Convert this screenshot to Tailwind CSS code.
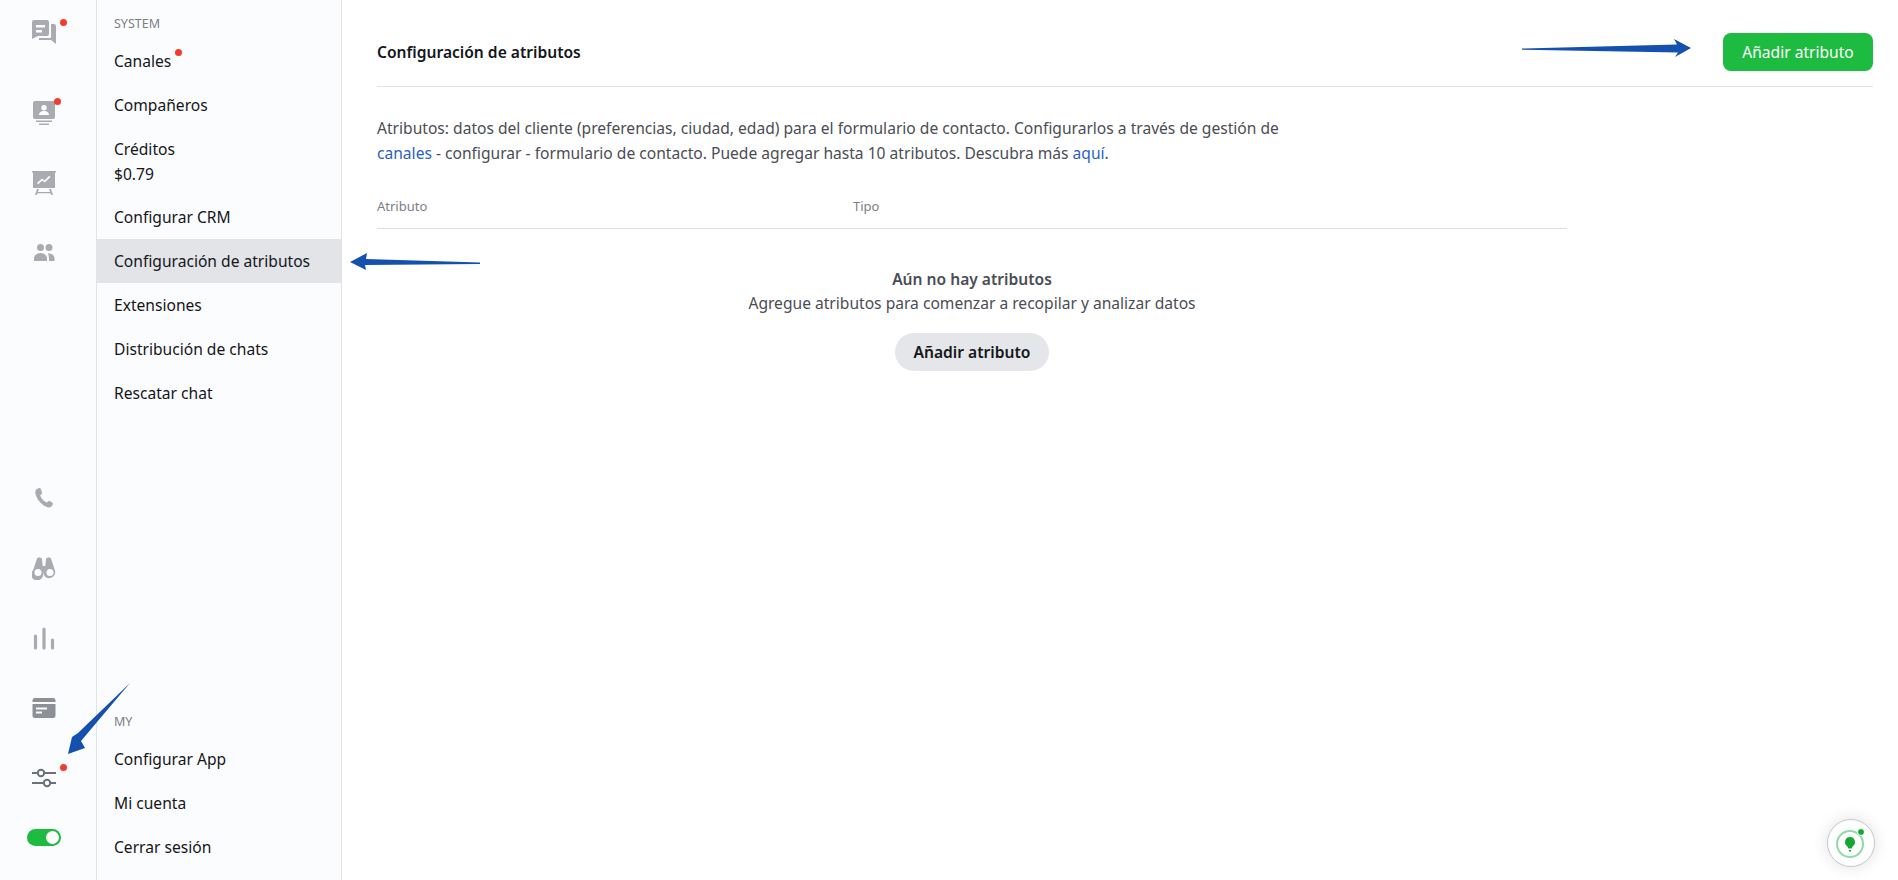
<!DOCTYPE html>
<html lang="es">
  <head>
    <meta charset="UTF-8">
    <meta name="viewport" content="width=device-width, initial-scale=1.0">
    <title>Configuración de atributos</title>
    <script src="https://cdn.jsdelivr.net/npm/@tailwindcss/browser@4"></script>
  </head>
  <body class="bg-white font-['Noto_Sans',sans-serif] text-[15.6px] text-[#14161a] overflow-hidden">
    <div class="relative flex h-[880px] w-[1898px]">

      <!-- icon rail -->
      <nav class="flex w-[97px] shrink-0 flex-col justify-between border-r border-[#e1e3e7] bg-[#fbfcfe] pb-[19px] pr-[9px]">
        <div>
          <div class="flex h-[64px] items-center justify-center">
            <div class="relative h-6 w-6">
              <svg viewBox="0 0 24 24" class="h-6 w-6 text-[#a9abb0]" fill="currentColor"><path fill-rule="evenodd" d="M2 0h13a2 2 0 0 1 2 2v12a2 2 0 0 1-2 2H6l-6 3V2a2 2 0 0 1 2-2zm2 5v2.500h9V5zm0 5v2.500h6V10z"/><path d="M19 4h3a2 2 0 0 1 2 2v18l-5-4H7v-2h12z"/></svg>
              <span class="absolute left-[28px] top-[-1px] h-[7px] w-[7px] rounded-full bg-[#f23c30]"></span>
            </div>
          </div>
          <div class="mt-[14px] flex h-[70px] items-center justify-center">
            <div class="relative h-6 w-6">
              <svg viewBox="0 0 24 24" class="h-6 w-6 text-[#a9abb0]" fill="currentColor"><path fill-rule="evenodd" d="M3 0h18a2 2 0 0 1 2 2v14a2 2 0 0 1-2 2H3a2 2 0 0 1-2-2V2a2 2 0 0 1 2-2zm9 4a2.700 2.700 0 1 0 0 5.400A2.700 2.700 0 0 0 12 4zm-5 10h10c0-2.500-2.500-4-5-4s-5 1.500-5 4z"/><path d="M4 19.500h16V21H4zM7 22.500h10V24H7z"/></svg>
              <span class="absolute left-[22px] top-[-3px] h-[7px] w-[7px] rounded-full bg-[#f23c30]"></span>
            </div>
          </div>
          <div class="flex h-[70px] items-center justify-center">
            <svg viewBox="0 0 24 24" class="h-6 w-6 text-[#a9abb0]" fill="currentColor"><path fill-rule="evenodd" d="M0 0h24v1.500h-1V17H1V1.500H0zM5 12l1.200 1.200 4-3.700 2.500 2L18.500 6l-1.300-1.200-4.700 4.700-2.400-2z"/><path d="M5 18h2l-1 3h12l-1-3h2l2 6h-1.800l-.7-1.800H5.500L4.800 24H3z"/></svg>
          </div>
          <div class="flex h-[70px] items-center justify-center">
            <svg viewBox="0 0 24 24" class="h-6 w-6 text-[#a9abb0]" fill="currentColor"><circle cx="8.500" cy="6.500" r="3.500"/><circle cx="17" cy="6.500" r="3.500"/><path d="M2 20v-2.500C2 14 5.500 12 8.500 12s6.500 2 6.500 5.500V20z"/><path d="M16 12.200c3 0 6.500 1.800 6.500 5V20H17v-2.500c0-2-.5-3.800-1-5.300z"/></svg>
          </div>
        </div>
        <div>
          <div class="flex h-[70px] items-center justify-center">
            <svg viewBox="0 0 24 24" class="h-6 w-6 text-[#a9abb0]" fill="currentColor"><path d="M7 2 4.500 3.200C3 4.500 3 7 4.200 10c1.800 4.800 5.800 9 10 10.800 2.500 1 4.700.8 5.800-.8l.8-1.700c.2-.7 0-1.300-.6-1.700l-2.500-1.500c-.6-.3-1.200-.2-1.700.3l-1 1.200c-3-1-5.700-4-6.800-7.300l1.300-1.100c.5-.4.600-1 .4-1.600L8.900 2.900C8.600 2.100 7.800 1.700 7 2z"/></svg>
          </div>
          <div class="flex h-[70px] items-center justify-center">
            <svg viewBox="0 0 24 24" class="h-6 w-6 text-[#a9abb0]" fill="currentColor"><path fill-rule="evenodd" d="M5 2.500C5.500 1 9.500 1 10 3l.7 7h2.600l.7-7c.5-2 4.500-2 5 -.5l3.800 11.500a6 6 0 1 1-11.600 2.500h-.4A6 6 0 1 1 1.200 14zM6 13a3.500 3.500 0 1 0 0 7 3.500 3.500 0 0 0 0-7zm12 0a3.500 3.500 0 1 0 0 7 3.500 3.500 0 0 0 0-7z"/></svg>
          </div>
          <div class="flex h-[70px] items-center justify-center">
            <svg viewBox="0 0 24 24" class="h-6 w-6 text-[#a9abb0]" fill="none" stroke="currentColor" stroke-width="3.200" stroke-linecap="round"><path d="M3.500 10v12M12 3v19M20.500 14v8"/></svg>
          </div>
          <div class="flex h-[70px] items-center justify-center">
            <svg viewBox="0 0 24 24" class="h-6 w-6 text-[#8d9096]" fill="currentColor"><path fill-rule="evenodd" d="M3 2h18a2.500 2.500 0 0 1 2.500 2.500V6H.5V4.500A2.500 2.500 0 0 1 3 2zM.5 8h23v11.500A2.500 2.500 0 0 1 21 22H3a2.500 2.500 0 0 1-2.500-2.500zM4 11.500v2h11v-2zm0 4v2h6v-2z"/></svg>
          </div>
          <div class="flex h-[70px] items-center justify-center">
            <div class="relative h-6 w-6">
              <svg viewBox="0 0 24 24" class="h-6 w-6 text-[#6d7076]" fill="none" stroke="currentColor" stroke-width="2"><path d="M0 7h5.500M12 7h12M0 17h11.500M18 17h6" stroke-linecap="round"/><circle cx="9" cy="7" r="3.200"/><circle cx="15" cy="17" r="3.200"/></svg>
              <span class="absolute left-[28px] top-[-2px] h-[7px] w-[7px] rounded-full bg-[#f23c30]"></span>
            </div>
          </div>
          <div class="flex h-[48px] items-center justify-center">
            <div class="flex h-[17px] w-[34px] items-center justify-end rounded-full bg-[#1dbb3f] pr-[2px]">
              <span class="h-[13px] w-[13px] rounded-full bg-white"></span>
            </div>
          </div>
        </div>
      </nav>

      <!-- submenu -->
      <aside class="flex w-[245px] shrink-0 flex-col justify-between border-r border-[#e1e3e7] bg-[#fbfcfe] pb-[11px]">
        <div>
          <div class="px-[17px] pt-[16px] pb-[7px] text-[12.500px] leading-[16px] text-[#7b7e85]">SYSTEM</div>
          <a class="flex h-[44px] items-center px-[17px] pt-[2px]"><span class="relative">Canales<span class="absolute right-[-11px] top-[-1px] h-[7px] w-[7px] rounded-full bg-[#f23c30]"></span></span></a>
          <a class="flex h-[44px] items-center px-[17px] pt-[2px]">Compañeros</a>
          <a class="block h-[68px] px-[17px] pt-[10px] leading-[25px]">Créditos<br>$0.79</a>
          <a class="flex h-[44px] items-center px-[17px] pt-[2px]">Configurar CRM</a>
          <a class="flex h-[44px] items-center bg-[#e2e4e8] px-[17px] pt-[2px]">Configuración de atributos</a>
          <a class="flex h-[44px] items-center px-[17px] pt-[2px]">Extensiones</a>
          <a class="flex h-[44px] items-center px-[17px] pt-[2px]">Distribución de chats</a>
          <a class="flex h-[44px] items-center px-[17px] pt-[2px]">Rescatar chat</a>
        </div>
        <div>
          <div class="px-[17px] pb-[7px] text-[12.500px] leading-[16px] text-[#7b7e85]">MY</div>
          <a class="flex h-[44px] items-center px-[17px] pt-[2px]">Configurar App</a>
          <a class="flex h-[44px] items-center px-[17px] pt-[2px]">Mi cuenta</a>
          <a class="flex h-[44px] items-center px-[17px] pt-[2px]">Cerrar sesión</a>
        </div>
      </aside>

      <!-- main -->
      <main class="min-w-0 flex-1 pl-[35px] pr-[25px]">
        <header class="flex h-[87px] items-center justify-between border-b border-[#e1e3e7] pt-[18px]">
          <h1 class="pt-[2px] font-semibold text-[#14161a]">Configuración de atributos</h1>
          <button class="h-[38px] w-[150px] rounded-[8px] bg-[#1dbb3f] pt-[2px] text-white">Añadir atributo</button>
        </header>
        <p class="mt-[29px] w-[930px] leading-[25px] text-[#4a4d54]">
          Atributos: datos del cliente (preferencias, ciudad, edad) para el formulario de contacto. Configurarlos a través de gestión de
          <a class="text-[#2a5fc0]">canales</a> - configurar - formulario de contacto. Puede agregar hasta 10 atributos. Descubra más <a class="text-[#2a5fc0]">aquí</a>.
        </p>
        <div class="mt-[29px] w-[1190px]">
          <div class="flex h-[34px] items-center border-b border-[#dcdee2] pb-[9px] text-[13px] text-[#7b7e85]">
            <span class="w-[476px]">Atributo</span>
            <span>Tipo</span>
          </div>
          <div class="flex flex-col items-center pt-[38px] text-center">
            <div class="font-semibold leading-[24px] text-[#4a4d54]">Aún no hay atributos</div>
            <div class="leading-[24px] text-[#4a4d54]">Agregue atributos para comenzar a recopilar y analizar datos</div>
            <button class="mt-[18px] h-[38px] w-[154px] rounded-full bg-[#e4e6e9] pt-[2px] font-semibold text-[#14161a]">Añadir atributo</button>
          </div>
        </div>
      </main>

      <!-- help widget -->
      <div class="absolute left-[1827px] top-[819px] flex h-[48px] w-[48px] items-center justify-center rounded-full border border-[#c6c8cc] bg-white shadow-[0_0_16px_rgba(0,0,0,0.12)]">
        <svg viewBox="0 0 32 32" class="h-8 w-8" fill="none">
          <circle cx="15" cy="17" r="13" stroke="#8edca8" stroke-width="2"/>
          <circle cx="26" cy="5" r="3.500" fill="#12a832" stroke="white"/>
          <path d="M15 10a5 5 0 0 1 3 9l-1.500 2.500h-3L12 19a5 5 0 0 1 3-9zM14 23h2v1.500h-2z" fill="#12a832"/>
        </svg>
      </div>

      <!-- annotation arrows drawn over the screenshot -->
      <svg class="pointer-events-none absolute inset-0" width="1898" height="880" viewBox="0 0 1898 880">
        <polygon fill="#1450ad" points="1522,48.500 1677,44.500 1674,39 1691,48 1675,57 1678,52.500 1522,49.800"/>
        <polygon fill="#1450ad" points="480,262.500 366,259 367,253 350,262 366,270 365,265 480,264"/>
        <polygon fill="#1450ad" points="130,683 78,733 72,737 68,754 85,748 81,741"/>
      </svg>
    </div>
  </body>
</html>
